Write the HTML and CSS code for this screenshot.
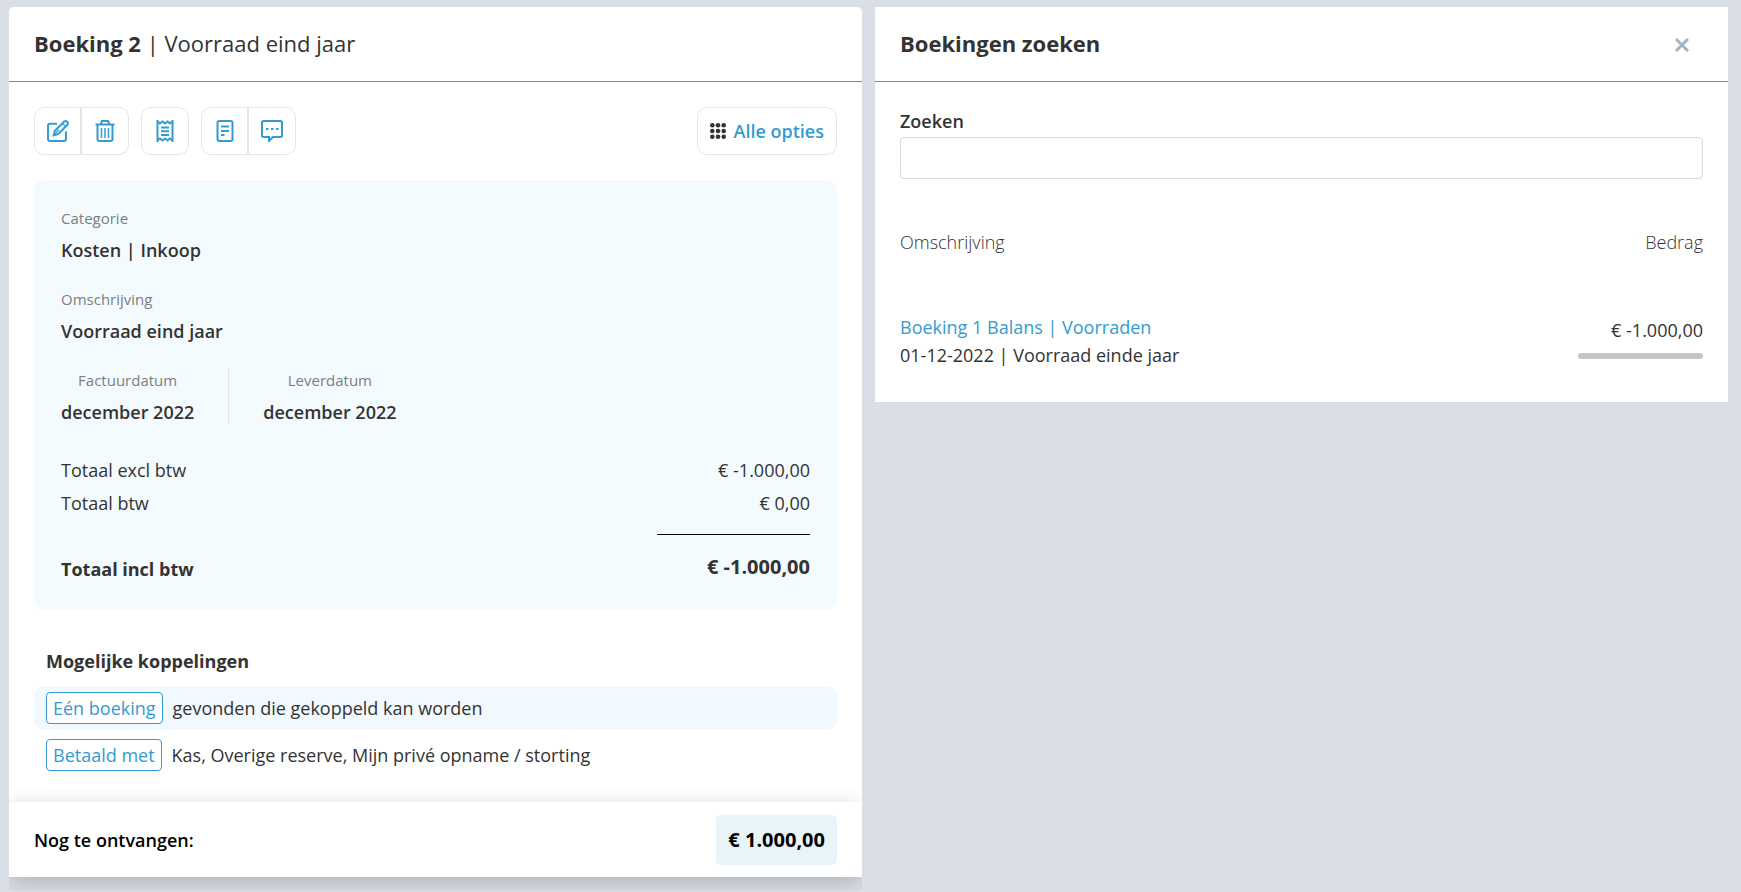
FILE: index.html
```html
<!DOCTYPE html>
<html lang="nl">
<head>
<meta charset="UTF-8" />
<meta name="viewport" content="width=device-width, initial-scale=1" />
<title>Boeking 2 | Voorraad eind jaar</title>
<link rel="stylesheet" href="styles.css">
</head>
<body>

<main class="columns">

  <div class="column">
    <section class="panel booking">
      <header class="panel-header">
        <h1 class="title"><strong>Boeking 2</strong> | Voorraad eind jaar</h1>
      </header>

      <div class="panel-body">
        <div class="toolbar">
          <div class="btn-group">
            <button type="button" class="btn" aria-label="Bewerken">
              <svg class="icon" viewBox="0 0 22 22">
                <path d="M10 3.7H3.2Q1 3.7 1 6v13q0 2 2.2 2h13.600q2.200 0 2.200-2v-7.500" />
                <path d="M6.600 15.400l1.300-4.600 9.300-9.200q1.500-1.200 3 .2t.2 3l-9.200 9.300z" />
                <path d="M15.500 3.500l3 3M7 15l5-5" stroke-width="1.300" />
              </svg>
            </button>
            <button type="button" class="btn" aria-label="Verwijderen">
              <svg class="icon" viewBox="0 0 22 22">
                <path d="M1.500 4.500h19M6.500 4.500l1.500-3.500h6l1.500 3.500M3.500 5v14q0 2 2 2h11q2 0 2-2V5" />
                <path d="M7.500 8v10M11 8v10M14.500 8v10" stroke-width="1.500" />
              </svg>
            </button>
          </div>
          <div class="btn-group">
            <button type="button" class="btn" aria-label="Bon">
              <svg class="icon" viewBox="0 0 22 22">
                <path d="M3.500 0v22M18.500 0v22" />
                <path d="M3.500 1.500l2.500 2 2.500-2 2.500 2 2.500-2 2.500 2 2.500-2M3.500 20.500l2.500-2 2.500 2 2.500-2 2.500 2 2.500-2 2.500 2" />
                <path d="M7 7.500h8M7 11.200h8M7 15h8" />
              </svg>
            </button>
          </div>
          <div class="btn-group">
            <button type="button" class="btn" aria-label="Document">
              <svg class="icon" viewBox="0 0 22 22">
                <rect x="3.500" y="1" width="15" height="20" rx="2" />
                <path d="M7 6.500h8M7 11h8M7 15h3.500" />
              </svg>
            </button>
            <button type="button" class="btn" aria-label="Opmerking">
              <svg class="icon" viewBox="0 0 22 22">
                <path d="M2.500 1h17q1.500 0 1.500 1.500v13q0 1.500-1.500 1.500H12l-4 4v-4H2.500Q1 17 1 15.500v-13Q1 1 2.500 1z" />
                <path d="M5 9h2.500M10 9h2.500M15 9h2.500" stroke-width="2.200" />
              </svg>
            </button>
          </div>
          <button type="button" class="btn btn-all">
            <svg class="icon-grid" viewBox="0 0 16 16">
              <circle cx="2.300" cy="2.300" r="2.300" /><circle cx="8" cy="2.300" r="2.300" /><circle cx="13.700" cy="2.300" r="2.300" />
              <circle cx="2.300" cy="8" r="2.300" /><circle cx="8" cy="8" r="2.300" /><circle cx="13.700" cy="8" r="2.300" />
              <circle cx="2.300" cy="13.700" r="2.300" /><circle cx="8" cy="13.700" r="2.300" /><circle cx="13.700" cy="13.700" r="2.300" />
            </svg>
            Alle opties
          </button>
        </div>

        <div class="summary">
          <dl class="field">
            <dt>Categorie</dt>
            <dd>Kosten | Inkoop</dd>
          </dl>
          <dl class="field">
            <dt>Omschrijving</dt>
            <dd>Voorraad eind jaar</dd>
          </dl>
          <div class="dates">
            <dl class="field">
              <dt>Factuurdatum</dt>
              <dd>december 2022</dd>
            </dl>
            <div class="divider"></div>
            <dl class="field">
              <dt>Leverdatum</dt>
              <dd>december 2022</dd>
            </dl>
          </div>

          <dl class="totals">
            <div class="total-row">
              <dt>Totaal excl btw</dt>
              <dd>€ -1.000,00</dd>
            </div>
            <div class="total-row">
              <dt>Totaal btw</dt>
              <dd>€ 0,00</dd>
            </div>
            <div class="total-row total-incl">
              <dt>Totaal incl btw</dt>
              <dd>€ -1.000,00</dd>
            </div>
          </dl>
        </div>

        <div class="links">
          <h2 class="links-title">Mogelijke koppelingen</h2>
          <div class="link-row active">
            <button type="button" class="chip">Eén boeking</button>
            <span>gevonden die gekoppeld kan worden</span>
          </div>
          <div class="link-row">
            <button type="button" class="chip">Betaald met</button>
            <span>Kas, Overige reserve, Mijn privé opname / storting</span>
          </div>
        </div>
      </div>

      <footer class="panel-footer">
        <span>Nog te ontvangen:</span>
        <strong class="amount">€ 1.000,00</strong>
      </footer>
    </section>
  </div>

  <section class="panel search">
    <header class="panel-header">
      <h2 class="title"><strong>Boekingen zoeken</strong></h2>
      <button type="button" class="close" aria-label="Sluiten">
        <svg class="icon-close" viewBox="0 0 14 14">
          <path d="M1 1l12 12M13 1L1 13" />
        </svg>
      </button>
    </header>

    <div class="panel-body">
      <label class="search-label" for="search">Zoeken</label>
      <input class="search-input" type="text" id="search" />

      <table class="results">
        <thead>
          <tr>
            <th>Omschrijving</th>
            <th class="right">Bedrag</th>
          </tr>
        </thead>
        <tbody>
          <tr>
            <td>
              <a href="#">Boeking 1 Balans | Voorraden</a>
              <div>01-12-2022 | Voorraad einde jaar</div>
            </td>
            <td class="right">
              € -1.000,00
              <div class="bar"></div>
            </td>
          </tr>
        </tbody>
      </table>
    </div>
  </section>

</main>

</body>
</html>
```

FILE: styles.css
```css
* {
  box-sizing: border-box;
}

body {
  margin: 0;
  background: #dadee7;
  color: #333;
  font-family: 'Open Sans', sans-serif;
  font-size: 18px;
  line-height: 28px;
}

h1, h2, dl, dd {
  margin: 0;
}

button {
  font: inherit;
  cursor: pointer;
}

.columns {
  display: grid;
  grid-template-columns: 1fr 1fr;
  gap: 13px;
  align-items: start;
  padding: 7px 13px 0 9px;
}

/* clips the footer shadow at the sides of the panel */
.column {
  overflow: hidden;
  padding-bottom: 14px;
}

.panel {
  background: #fff;
}

.booking {
  border-radius: 5px 5px 0 0;
}

.panel-header {
  display: flex;
  align-items: center;
  justify-content: space-between;
  height: 75px;
  padding: 0 25px;
  border-bottom: 1px solid #3c9ac9;
}

.title {
  padding-bottom: 2px;
  font-size: 22px;
  font-weight: 400;
}

.panel-body {
  padding: 25px;
}

/* toolbar */
.toolbar {
  display: flex;
  gap: 12px;
  margin-bottom: 25px;
}

.btn-group {
  display: flex;
}

.btn {
  display: flex;
  align-items: center;
  justify-content: center;
  width: 48px;
  height: 48px;
  padding: 0;
  background: #fff;
  border: 1px solid #e5e5e5;
  border-radius: 10px;
  color: #349bd0;
}

.btn-group .btn:not(:last-child) {
  width: 47px;
  border-top-right-radius: 0;
  border-bottom-right-radius: 0;
}

.btn-group .btn:not(:first-child) {
  border-top-left-radius: 0;
  border-bottom-left-radius: 0;
}

.btn-all {
  width: auto;
  gap: 8px;
  margin-left: auto;
  padding: 0 12px;
  font-weight: 600;
}

.icon {
  width: 22px;
  height: 22px;
  fill: none;
  stroke: currentColor;
  stroke-width: 2;
}

.icon-grid {
  width: 16px;
  height: 16px;
  fill: #333;
}

/* summary card */
.summary {
  padding: 22px 27px 24px;
  background: #f3fbff;
  border-radius: 10px;
}

.field {
  margin-bottom: 17px;
  line-height: 32px;
}

.field dt {
  color: #7b7f81;
  font-size: 15px;
}

.field dd {
  font-weight: 600;
}

.dates {
  display: flex;
  align-items: center;
  gap: 34px;
  margin: 17px 0 26px;
  text-align: center;
}

.dates .field {
  margin: 0;
}

.divider {
  width: 1px;
  height: 56px;
  background: #e0e4e6;
}

.totals {
  line-height: 33px;
}

.total-row {
  display: flex;
  justify-content: space-between;
}

.total-incl {
  font-weight: 700;
}

.total-incl dt {
  padding-top: 33px;
}

.total-incl dd {
  width: 153px;
  margin-top: 14px;
  padding-top: 17px;
  border-top: 1px solid #000;
  font-size: 20px;
  line-height: 30px;
  text-align: right;
}

/* possible links */
.links {
  display: flex;
  flex-direction: column;
  gap: 3px;
  padding-top: 37px;
}

.links-title {
  margin-bottom: 8px;
  padding-left: 12px;
  font-size: 18px;
  font-weight: 700;
}

.link-row {
  display: flex;
  align-items: center;
  gap: 10px;
  height: 44px;
  padding: 0 12px;
  border-radius: 10px;
}

.link-row.active {
  background: #f1f9ff;
}

.chip {
  height: 32px;
  padding: 0 6px;
  background: #fff;
  border: 1px solid #349bd0;
  border-radius: 4px;
  color: #349bd0;
  line-height: 28px;
}

.panel-footer {
  display: flex;
  align-items: center;
  justify-content: space-between;
  height: 75px;
  padding: 0 25px;
  background: #fff;
  box-shadow: 0 5px 20px rgba(0, 0, 0, 0.2);
  color: #000;
  font-weight: 600;
}

.amount {
  padding: 11px 12px;
  background: #e9f4f8;
  border-radius: 5px;
  font-size: 20px;
  font-weight: 700;
}

/* search panel */
.close {
  display: flex;
  padding: 16px 14px 14px;
  background: none;
  border: 0;
  color: #a5b5c0;
}

.icon-close {
  width: 14px;
  height: 14px;
  fill: none;
  stroke: currentColor;
  stroke-width: 3;
}

.search-label {
  display: block;
  margin-bottom: 2px;
  font-weight: 600;
}

.search-input {
  display: block;
  width: 100%;
  height: 42px;
  padding: 0 12px;
  border: 1px solid #d9dadb;
  border-radius: 4px;
  font: inherit;
}

.results {
  width: 100%;
  margin-top: 49px;
  border-collapse: collapse;
}

.results th {
  padding: 0 0 57px;
  font-weight: 300;
  text-align: left;
}

.results td {
  padding: 0 0 8px;
  vertical-align: top;
}

.results .right {
  text-align: right;
}

.results td.right {
  padding: 3px 0 0;
}

.results a {
  color: #349bd0;
  text-decoration: none;
}

.bar {
  width: 125px;
  height: 6px;
  margin: 9px 0 0 auto;
  background: #c5c5c5;
  border-radius: 3px;
}
```
